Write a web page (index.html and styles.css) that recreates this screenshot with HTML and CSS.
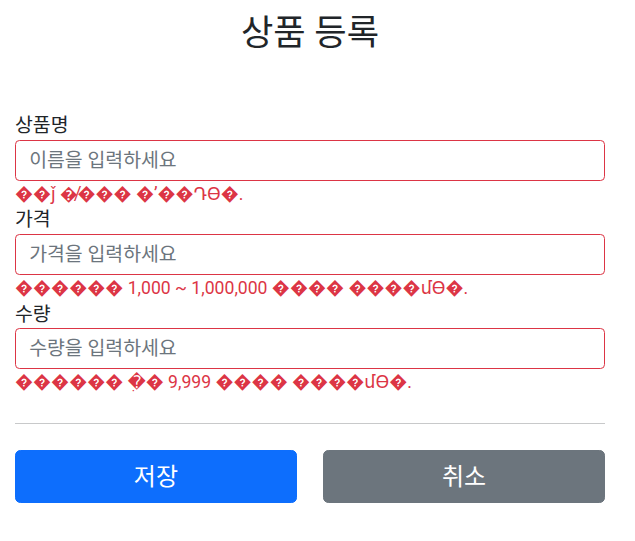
FILE: index.html
```html
<!DOCTYPE html>
<html lang="ko">
<head>
<meta charset="utf-8">
<title>상품 등록</title>
<link rel="stylesheet" href="styles.css">
</head>
<body>
<div class="container">
  <div class="title">
    <h2>상품 등록</h2>
  </div>
  <form class="form" action="#" onsubmit="return false">
    <div class="field">
      <label for="itemName">상품명</label>
      <input type="text" id="itemName" class="form-control field-border" placeholder="이름을 입력하세요">
      <div class="field-error">&#xFFFD;&#xFFFD;&#x01F0; &#xFFFD;&#x0338;&#xFFFD;&#xFFFD;&#xFFFD; &#xFFFD;&#x02BC;&#xFFFD;&#xFFFD;&#x0534;&#x03F4;&#xFFFD;.</div>
    </div>
    <div class="field">
      <label for="price">가격</label>
      <input type="text" id="price" class="form-control field-border" placeholder="가격을 입력하세요">
      <div class="field-error">&#xFFFD;&#xFFFD;&#xFFFD;&#xFFFD;&#xFFFD;&#xFFFD; 1,000 ~ 1,000,000 &#xFFFD;&#xFFFD;&#xFFFD;&#xFFFD; &#xFFFD;&#xFFFD;&#xFFFD;&#xFFFD;&#x0574;&#x03F4;&#xFFFD;.</div>
    </div>
    <div class="field">
      <label for="quantity">수량</label>
      <input type="text" id="quantity" class="form-control field-border" placeholder="수량을 입력하세요">
      <div class="field-error">&#xFFFD;&#xFFFD;&#xFFFD;&#xFFFD;&#xFFFD;&#xFFFD; &#xFFFD;&#x05B4;&#xFFFD; 9,999 &#xFFFD;&#xFFFD;&#xFFFD;&#xFFFD; &#xFFFD;&#xFFFD;&#xFFFD;&#xFFFD;&#x0574;&#x03F4;&#xFFFD;.</div>
    </div>
    <hr class="divider">
    <div class="row">
      <div class="col"><button class="btn btn-primary" type="submit">저장</button></div>
      <div class="col"><button class="btn btn-secondary" type="button">취소</button></div>
    </div>
  </form>
</div>
</body>
</html>
```

FILE: styles.css
```css
html, body {
  margin: 0;
  padding: 0;
  background: #fff;
}
body {
  font-family: Roboto, "Noto Sans CJK KR", sans-serif;
  font-size: 17.6px;
  line-height: 1.5;
  color: #212529;
}
.container {
  width: 590px;
  margin-left: 15px;
}
.title {
  text-align: center;
  padding-top: 12px;
  padding-bottom: 50.2px;
}
.title h2 {
  margin: 0 0 8.8px;
  font-size: 35.2px;
  font-weight: 400;
  line-height: 1.2;
}
.field label {
  display: inline-block;
  font-size: 19.4px;
  line-height: 26.4px;
  vertical-align: top;
}
.form-control {
  display: block;
  width: 100%;
  box-sizing: border-box;
  height: 41.4px;
  padding: 0 13.2px;
  font-family: inherit;
  font-size: 19.4px;
  line-height: 26.4px;
  color: #212529;
  background: #fff;
  border: 1px solid #ced4da;
  border-radius: 4.4px;
  outline: none;
}
.form-control::placeholder {
  color: #6c757d;
  opacity: 1;
}
.field-border {
  border-color: #dc3545;
}
.field-error {
  color: #dc3545;
  line-height: 26.4px;
  font-family: Roboto, "Noto Sans", "Liberation Sans", "DejaVu Sans", sans-serif;
}
.divider {
  margin: 27px 0 26.4px;
  border: 0;
  border-top: 1px solid #c8c9ca;
  height: 0;
}
.row {
  display: flex;
  gap: 26.4px;
}
.col {
  flex: 1;
}
.btn {
  display: flex;
  align-items: center;
  justify-content: center;
  width: 100%;
  height: 52.8px;
  padding: 0 17.6px;
  font-family: inherit;
  font-size: 24px;
  line-height: 1.5;
  color: #fff;
  border: 1px solid transparent;
  border-radius: 5.3px;
  cursor: pointer;
}
.btn-primary {
  background: #0d6efd;
  border-color: #0d6efd;
}
.btn-secondary {
  background: #6c757d;
  border-color: #6c757d;
}
```
